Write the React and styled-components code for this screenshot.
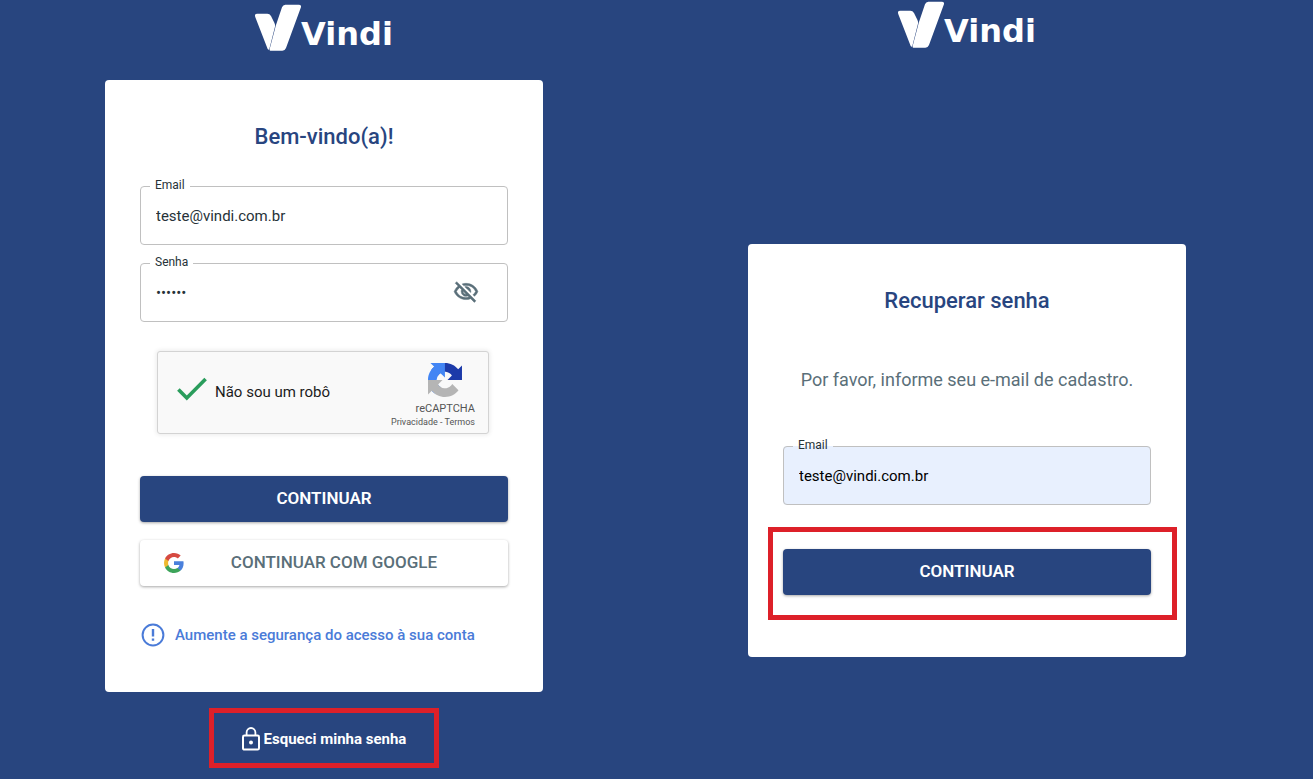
import React, { useState } from "react";
import styled, { createGlobalStyle } from "styled-components";
import { MdOutlineVisibilityOff } from "react-icons/md";

const theme = {
  primary: "#28457f",
  link: "#4a7bd8",
  text: "#263238",
  greyText: "#5a6f79",
  border: "#c0c0c0",
  highlight: "#dd2029",
  autofill: "#e8f0fe",
  white: "#ffffff",
};

const VindiLogo = () => (
  <Logo>
    <svg width="46" height="47" viewBox="46 10 138 141" aria-hidden="true">
      <path
        fill="currentColor"
        d="M53 39H83Q90 39 94 46L104 66Q108 73 105 82L89 145Q87 150 84 145L47 50Q43 39 53 39Z"
      />
      <path
        fill="currentColor"
        d="M137 12H177Q187 12 183 22L139 142Q136 150 128 150H92Q89 150 90 145L106 84L108 76L127 20Q130 12 137 12Z"
      />
    </svg>
    <span>Vindi</span>
  </Logo>
);

const RecaptchaIcon = () => (
  <svg width="34" height="34" viewBox="0 0 64 64" aria-hidden="true">
    <path
      fill="#1c3aa9"
      d="M64 31.955l-.033-1.37V4.687l-7.16 7.16C50.948 4.674 42.033.093 32.05.093c-10.4 0-19.622 4.96-25.458 12.64l11.736 11.86a15.55 15.55 0 0 1 4.754-5.334c2.05-1.6 4.952-2.906 8.968-2.906.485 0 .86.057 1.135.163 4.976.393 9.288 3.14 11.828 7.124l-8.307 8.307L64 31.953"
    />
    <path
      fill="#4285f4"
      d="M31.862.094l-1.37.033H4.594l7.16 7.16C4.58 13.147 0 22.06 0 32.046c0 10.4 4.96 19.622 12.64 25.458L24.5 45.768a15.55 15.55 0 0 1-5.334-4.754c-1.6-2.05-2.906-4.952-2.906-8.968 0-.485.057-.86.163-1.135.393-4.976 3.14-9.288 7.124-11.828l8.307 8.307L31.86.095"
    />
    <path
      fill="#b5b5b5"
      d="M.001 32.045l.033 1.37v25.898l7.16-7.16c5.86 7.173 14.774 11.754 24.76 11.754 10.4 0 19.622-4.96 25.458-12.64l-11.736-11.86a15.55 15.55 0 0 1-4.754 5.334c-2.05 1.6-4.952 2.906-8.968 2.906-.485 0-.86-.057-1.135-.163-4.976-.393-9.288-3.14-11.828-7.124l8.307-8.307c-10.522.04-22.4.066-27.295-.005"
    />
  </svg>
);

const GoogleIcon = () => (
  <svg width="20" height="20" viewBox="2 2 44 44" aria-hidden="true">
    <path
      fill="#4a80dc"
      d="M45.12 24.5c0-1.56-.14-3.06-.4-4.5H24v8.51h11.84c-.51 2.75-2.06 5.08-4.39 6.64v5.52h7.11c4.16-3.83 6.56-9.47 6.56-16.17z"
    />
    <path
      fill="#3da45a"
      d="M24 46c5.94 0 10.92-1.97 14.56-5.33l-7.11-5.52c-1.97 1.32-4.49 2.1-7.45 2.1-5.73 0-10.58-3.87-12.31-9.07H4.34v5.7C7.96 41.07 15.4 46 24 46z"
    />
    <path
      fill="#efb92f"
      d="M11.69 28.18C11.25 26.86 11 25.45 11 24s.25-2.86.69-4.18v-5.7H4.34C2.85 17.09 2 20.45 2 24s.85 6.91 2.34 9.88l7.35-5.7z"
    />
    <path
      fill="#d64a41"
      d="M24 10.75c3.23 0 6.13 1.11 8.41 3.29l6.31-6.31C34.91 4.18 29.93 2 24 2 15.4 2 7.96 6.93 4.34 14.12l7.35 5.7c1.73-5.2 6.58-9.07 12.31-9.07z"
    />
  </svg>
);

const AlertIcon = () => (
  <svg width="24" height="24" viewBox="0 0 24 24" aria-hidden="true">
    <circle cx="12" cy="12" r="10.4" fill="none" stroke="currentColor" strokeWidth="2" />
    <path fill="currentColor" d="M10.8 6h2.4v7.4h-2.4zM10.8 15.4h2.4v2.4h-2.4z" />
  </svg>
);

const LockIcon = () => (
  <svg width="18" height="24" viewBox="0 0 18 24" aria-hidden="true">
    <rect x="1" y="8.6" width="16" height="14" rx="1.4" fill="none" stroke="currentColor" strokeWidth="2" />
    <path d="M4.6 8.6V5.4a4.4 4.4 0 0 1 8.8 0v3.2" fill="none" stroke="currentColor" strokeWidth="1.8" />
    <circle cx="9" cy="15.4" r="2" fill="currentColor" />
  </svg>
);

const TextField = ({ id, label, type = "text", value, onChange, filled, children }) => (
  <Field $filled={filled}>
    <legend>
      <label htmlFor={id}>{label}</label>
    </legend>
    <div className="field-row">
      <input
        id={id}
        type={type}
        value={value}
        onChange={(e) => onChange(e.target.value)}
      />
      {children}
    </div>
  </Field>
);

export default function App() {
  const [email, setEmail] = useState("teste@vindi.com.br");
  const [password, setPassword] = useState("123456");
  const [showPassword, setShowPassword] = useState(false);
  const [recoverEmail, setRecoverEmail] = useState("teste@vindi.com.br");
  const [human, setHuman] = useState(true);

  const handleShowPassword = () => setShowPassword((pre) => !pre);

  const handleSubmit = (e) => e.preventDefault();

  return (
    <>
      <GlobalStyle />
      <Page>
        <Panel $top="4px" $gap="29px">
          <VindiLogo />
          <Card onSubmit={handleSubmit} $bottom="44px">
            <Title>Bem-vindo(a)!</Title>
            <Fields>
              <TextField id="email" label="Email" value={email} onChange={setEmail} />
              <TextField
                id="password"
                label="Senha"
                type={showPassword ? "text" : "password"}
                value={password}
                onChange={setPassword}
              >
                <IconButton type="button" aria-label="Mostrar senha" onClick={handleShowPassword}>
                  <MdOutlineVisibilityOff size={26} />
                </IconButton>
              </TextField>
            </Fields>
            <Captcha>
              <CaptchaCheck>
                <span className="check">
                  <input
                    type="checkbox"
                    checked={human}
                    onChange={(e) => setHuman(e.target.checked)}
                  />
                  <svg width="30" height="24" viewBox="0 0 30 24" aria-hidden="true">
                    {human && (
                      <path d="M1.4 12.4l8.4 8.6L28.6 2" fill="none" stroke="#2a9d5c" strokeWidth="3.6" />
                    )}
                  </svg>
                </span>
                Não sou um robô
              </CaptchaCheck>
              <CaptchaBrand>
                <RecaptchaIcon />
                <div className="brand-name">reCAPTCHA</div>
                <div className="brand-links">
                  <a href="#privacidade">Privacidade</a> - <a href="#termos">Termos</a>
                </div>
              </CaptchaBrand>
            </Captcha>
            <Button type="submit">CONTINUAR</Button>
            <GoogleButton type="button">
              <GoogleIcon />
              <span>CONTINUAR COM GOOGLE</span>
            </GoogleButton>
            <SecurityLink href="#seguranca">
              <AlertIcon />
              Aumente a segurança do acesso à sua conta
            </SecurityLink>
          </Card>
          <ForgotBox>
            <a href="#recuperar">
              <LockIcon />
              Esqueci minha senha
            </a>
          </ForgotBox>
        </Panel>

        <Panel $top="1px" $gap="196px">
          <VindiLogo />
          <Card onSubmit={handleSubmit} $bottom="37px">
            <Title>Recuperar senha</Title>
            <Hint>Por favor, informe seu e-mail de cadastro.</Hint>
            <TextField
              id="recover-email"
              label="Email"
              value={recoverEmail}
              onChange={setRecoverEmail}
              filled
            />
            <ButtonHighlight>
              <Button type="submit">CONTINUAR</Button>
            </ButtonHighlight>
          </Card>
        </Panel>
      </Page>
    </>
  );
}

const GlobalStyle = createGlobalStyle`
  * {
    box-sizing: border-box;
  }
  body {
    margin: 0;
    background: ${theme.primary};
    font-family: Roboto, "Liberation Sans", sans-serif;
  }
  a {
    color: inherit;
    text-decoration: none;
  }
  button,
  input {
    font-family: inherit;
  }
  svg {
    flex-shrink: 0;
  }
`;

const Page = styled.main`
  display: grid;
  grid-template-columns: 1fr 1fr;
  gap: 1px;
  min-height: 100vh;
  padding: 0 25px 0 3px;
`;

const Panel = styled.section`
  display: flex;
  flex-direction: column;
  align-items: center;
  padding-top: ${({ $top }) => $top};
  > form {
    margin-top: ${({ $gap }) => $gap};
  }
`;

const Logo = styled.div`
  display: flex;
  align-items: flex-end;
  color: ${theme.white};
  span {
    font-family: "DejaVu Sans", sans-serif;
    font-size: 32px;
    font-weight: 700;
    line-height: 34px;
  }
`;

const Card = styled.form`
  display: flex;
  flex-direction: column;
  width: 100%;
  max-width: 438px;
  padding: 43px 35px ${({ $bottom }) => $bottom};
  border-radius: 4px;
  background: ${theme.white};
`;

const Title = styled.h1`
  margin: 0;
  color: ${theme.primary};
  font-size: 22px;
  font-weight: 500;
  line-height: 28px;
  text-align: center;
`;

const Hint = styled.p`
  margin: 51px 0 45px;
  color: ${theme.greyText};
  font-size: 18px;
  line-height: 28px;
  text-align: center;
`;

const Fields = styled.div`
  display: flex;
  flex-direction: column;
  gap: 11px;
  margin-top: 28px;
`;

const Field = styled.fieldset`
  min-width: 0;
  margin: 0;
  padding: 0;
  border: 1px solid ${theme.border};
  border-radius: 4px;
  background: ${({ $filled }) => ($filled ? theme.autofill : theme.white)};
  legend {
    margin-left: 9px;
    padding: 0 5px 2px;
    color: ${theme.text};
    font-size: 12px;
    line-height: 12px;
  }
  .field-row {
    display: flex;
    align-items: center;
    height: 51px;
    padding: 0 28px 5px 15px;
  }
  input {
    flex: 1;
    min-width: 0;
    padding: 0;
    border: 0;
    outline: 0;
    background: transparent;
    color: ${({ $filled }) => ($filled ? "#000000" : theme.text)};
    font-size: 15px;
    line-height: 20px;
  }
`;

const IconButton = styled.button`
  display: flex;
  padding: 0 0 2px;
  border: 0;
  background: transparent;
  color: ${theme.greyText};
  cursor: pointer;
  path:last-child {
    stroke: currentColor;
    stroke-width: 0.4px;
  }
`;

const Captcha = styled.div`
  display: flex;
  align-items: center;
  justify-content: space-between;
  height: 83px;
  margin: 29px 19px 42px 17px;
  padding: 0 13px 0 19px;
  border: 1px solid #d3d3d3;
  border-radius: 3px;
  background: #f9f9f9;
  box-shadow: 0 0 4px 1px rgba(0, 0, 0, 0.08);
`;

const CaptchaCheck = styled.label`
  display: flex;
  align-items: center;
  gap: 8px;
  padding-bottom: 2px;
  color: #1c1c1c;
  font-size: 15px;
  line-height: 20px;
  .check {
    display: grid;
    padding-bottom: 6px;
  }
  .check > * {
    grid-area: 1 / 1;
    margin: 0;
  }
  input {
    width: 30px;
    height: 24px;
    opacity: 0;
  }
`;

const CaptchaBrand = styled.div`
  display: flex;
  flex-direction: column;
  align-items: flex-end;
  padding-top: 6px;
  color: #555555;
  svg {
    margin-right: 13px;
  }
  .brand-name {
    margin-top: 5px;
    font-size: 11px;
    line-height: 14px;
  }
  .brand-links {
    font-size: 9px;
    line-height: 12px;
  }
`;

const Button = styled.button`
  display: flex;
  align-items: center;
  justify-content: center;
  width: 100%;
  height: 46px;
  padding: 0 24px 2px;
  border: 0;
  border-radius: 4px;
  background: ${theme.primary};
  color: ${theme.white};
  box-shadow: 0 1px 3px rgba(0, 0, 0, 0.35);
  font-size: 17px;
  font-weight: 600;
  line-height: 22px;
  cursor: pointer;
`;

const GoogleButton = styled(Button)`
  margin-top: 18px;
  padding-bottom: 0;
  background: ${theme.white};
  color: ${theme.greyText};
  font-weight: 500;
  span {
    flex: 1;
    padding-bottom: 2px;
    text-align: center;
  }
`;

const SecurityLink = styled.a`
  display: flex;
  align-items: center;
  gap: 10px;
  margin-top: 36px;
  padding-left: 1px;
  color: ${theme.link};
  font-size: 15px;
  font-weight: 500;
  line-height: 26px;
`;

const ForgotBox = styled.div`
  margin-top: 16px;
  padding: 13px 28px 11px;
  border: 5px solid ${theme.highlight};
  a {
    display: flex;
    align-items: center;
    gap: 4px;
    color: ${theme.white};
    font-size: 15px;
    font-weight: 700;
    line-height: 26px;
  }
`;

const ButtonHighlight = styled.div`
  margin: 22px -26px 0 -15px;
  padding: 17px 21px 20px 10px;
  border: 5px solid ${theme.highlight};
`;
